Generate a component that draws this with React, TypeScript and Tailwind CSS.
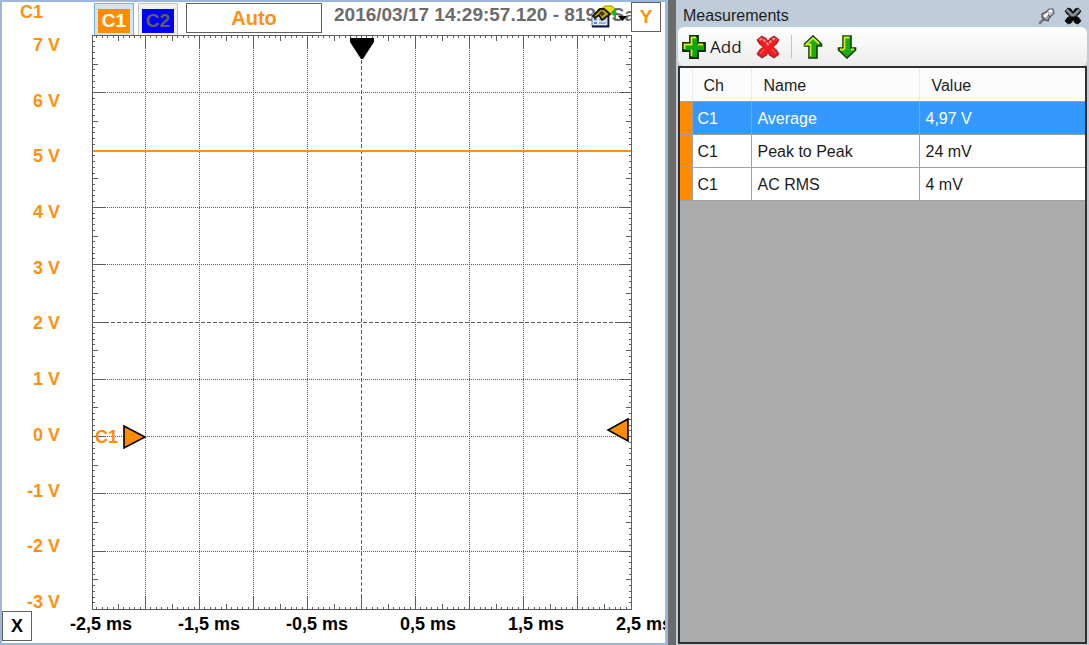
import React from "react";

const LEFT = 1;
const RIGHT = 539;
const TOP = 1;
const BOTTOM = 574;
const COL = 54;
const ROW = 57.3;
const GREY = "#5c5c5c";

const volts = ["7 V", "6 V", "5 V", "4 V", "3 V", "2 V", "1 V", "0 V", "-1 V", "-2 V", "-3 V"];
const times = ["-2,5 ms", "-1,5 ms", "-0,5 ms", "0,5 ms", "1,5 ms", "2,5 ms"];

const measurements = [
  { ch: "C1", name: "Average", value: "4,97 V" },
  { ch: "C1", name: "Peak to Peak", value: "24 mV" },
  { ch: "C1", name: "AC RMS", value: "4 mV" },
];

function tickLength(i: number) {
  if (i % 10 === 0) return 12;
  return i % 5 === 0 ? 5 : 2;
}

function Plot() {
  const columns = Array.from({ length: 9 }, (_, i) => RIGHT - COL * (9 - i));
  const rows = Array.from({ length: 9 }, (_, i) => Math.floor(TOP + ROW * (i + 1) - 0.5));
  const xTicks = Array.from({ length: 99 }, (_, i) => i + 1).map((i) => ({
    at: Math.round(RIGHT - (COL / 10) * i),
    len: tickLength(i),
  }));
  const yTicks = Array.from({ length: 99 }, (_, i) => i + 1).map((i) => ({
    at: Math.floor(TOP + (ROW / 10) * i - 0.5),
    len: tickLength(i),
  }));
  return (
    <svg
      className="block h-full w-full overflow-visible"
      viewBox="0 0 540 575"
      preserveAspectRatio="none"
      role="img"
      aria-label="Channel 1 trace"
    >
      <g stroke={GREY} strokeWidth="1" shapeRendering="crispEdges">
        {columns.map((x, i) => (
          <line key={x} x1={x + 0.5} x2={x + 0.5} y1={TOP} y2={BOTTOM} strokeDasharray={i === 4 ? "4 2" : "1 1"} />
        ))}
        {rows.map((y, i) => (
          <line key={y} x1={LEFT} x2={RIGHT} y1={y + 0.5} y2={y + 0.5} strokeDasharray={i === 4 ? "4 2" : "1 1"} />
        ))}
        {xTicks
          .filter((t) => t.at > LEFT)
          .map((t) => (
            <path key={t.at} d={`M${t.at + 0.5} ${TOP}v${t.len}M${t.at + 0.5} ${BOTTOM}v${-t.len}`} />
          ))}
        {yTicks.map((t) => (
          <path key={t.at} d={`M${LEFT} ${t.at + 0.5}h${t.len}M${RIGHT} ${t.at + 0.5}h${-t.len}`} />
        ))}
        <rect x={LEFT - 0.5} y={TOP - 0.5} width={RIGHT - LEFT + 1} height={BOTTOM - TOP + 1} fill="none" />
      </g>
      <path d="M1 116H539" stroke="#ff9010" strokeWidth="2" shapeRendering="crispEdges" />
      <path d="M258 3H282V7L271 24H269L258 7Z" fill="#000" />
      <path d="M32 391L53 402L32 413Z" fill="#ff8c00" stroke="#000" strokeWidth="1.6" />
      <path d="M536 384L516 395L536 406Z" fill="#ff8c00" stroke="#000" strokeWidth="1.6" />
      <text x="3" y="408" fill="#ff8c00" fontSize="18" fontWeight="bold">
        C1
      </text>
    </svg>
  );
}

function PropertiesIcon() {
  return (
    <svg width="37" height="24" viewBox="0 0 37 24" aria-hidden="true">
      <rect x="1" y="8" width="16" height="13" fill="#dfeafb" stroke="#5577ad" />
      <path d="M1 21.500H17.500V9" stroke="#0c1a38" strokeWidth="1.8" fill="none" />
      <path d="M3 14.500h3M3 18h3" stroke="#3668c8" strokeWidth="1.5" />
      <path d="M8 14.500h7M8 18h7" stroke="#7f9ed4" strokeWidth="1.5" />
      <path d="M10 4L14 1H21L24 4V8L18 10L12 8Z" fill="#f3dc10" stroke="#a18c06" />
      <path d="M20 7L25 3V14L22 10Z" fill="#12b42a" />
      <path d="M2 11L9 4H13L19 9L15 12L11 15L8 10L4 13Z" fill="#c4a61e" stroke="#1c1903" strokeWidth="1.8" />
      <path d="M8 8L11 6L14 9L11 11Z" fill="#3a330a" />
      <path d="M27 11H36L31.500 16Z" fill="#000" />
    </svg>
  );
}

function PlusIcon() {
  return (
    <svg width="24" height="24" viewBox="0 0 24 24" aria-hidden="true">
      <path d="M8 1H16V8H23V16H16V23H8V16H1V8H8Z" fill="#08a80c" stroke="#0b2a05" strokeWidth="1.8" />
      <path d="M9.500 21V14.500M2.500 14V9.500H9.500V2.500H14M16 9.500H21" fill="none" stroke="#d8ea1c" strokeWidth="1.8" />
    </svg>
  );
}

function RemoveIcon() {
  return (
    <svg width="24" height="24" viewBox="0 0 24 24" aria-hidden="true">
      <path
        d="M6 1.500L10 4L12 7L14 4L18 1.500L22.500 5L20 9L16.500 12L20 15L22.500 19L18 22.500L14 20L12 17L10 20L6 22.500L1.500 19L4 15L7.500 12L4 9L1.500 5Z"
        fill="#fb1a20"
        stroke="#b5252b"
        strokeWidth="1.6"
        strokeLinejoin="round"
      />
      <path d="M3.500 5L6 3.500L10 7L12 9.500L14 7L18 3.500L20.500 5" fill="none" stroke="#ff9e9c" strokeWidth="1.8" strokeDasharray="3 1.5" />
      <path d="M4 18.500L8 14M20 18.500L16 14" stroke="#ff5a58" strokeWidth="1.2" />
    </svg>
  );
}

function ArrowIcon({ down = false }: { down?: boolean }) {
  return (
    <svg width="20" height="24" viewBox="0 0 20 24" aria-hidden="true">
      {down ? (
        <>
          <path d="M6 1H14V13H18.500V15L10 23L1.500 15V13H6Z" fill="#1cae10" stroke="#16380a" strokeWidth="1.6" />
          <path d="M7.500 14V2.500H12.500M3 14.500H7.500M14 14.500H17" fill="none" stroke="#c9e830" strokeWidth="1.8" />
        </>
      ) : (
        <>
          <path d="M6 23H14V11H18.500V9L10 1L1.500 9V11H6Z" fill="#1cae10" stroke="#16380a" strokeWidth="1.6" />
          <path d="M7.500 21.500V9.500H3L10 3L16 8.500" fill="none" stroke="#c9e830" strokeWidth="1.8" />
        </>
      )}
    </svg>
  );
}

function PinIcon() {
  return (
    <svg width="18" height="18" viewBox="0 0 18 18" aria-hidden="true">
      <path d="M2 16L6 12" stroke="#77797c" strokeWidth="2.500" strokeLinecap="round" />
      <path d="M4 7Q3 12 10 14L12 9L8 5Z" fill="#a4a6a9" stroke="#4d5054" strokeWidth="1.2" />
      <path d="M8 5L11 2H15L16 6L12 10Z" fill="#c4c6c9" stroke="#5c5f63" strokeWidth="1.2" />
      <path d="M7 9L9 7M12 4L13 4" stroke="#fff" strokeWidth="2.500" strokeLinecap="round" />
    </svg>
  );
}

function CloseIcon() {
  return (
    <svg width="18" height="20" viewBox="0 0 18 20" aria-hidden="true">
      <path
        d="M4 2L7 3L9 6L11 3L14 2L17 5L15 8L12 10L15 12L17 15L14 18L11 17L9 14L7 17L4 18L1 15L3 12L6 10L3 8L1 5Z"
        fill="#080808"
        stroke="#222"
        strokeLinejoin="round"
      />
      <path d="M3.500 4.500L8 9H10L14.500 4.500" fill="none" stroke="#8b8e92" strokeWidth="3" strokeLinecap="round" />
    </svg>
  );
}

function ScopePanel() {
  return (
    <section className="flex w-[61.34%] shrink-0 flex-col overflow-hidden border-2 border-r-[3px] border-[#9bb7d9] bg-white font-bold">
      <div className="flex min-h-0 flex-1">
        <div className="flex w-[90px] shrink-0 flex-col text-[18px] text-[#ff9010]">
          <div className="h-[35px] pl-[18px] leading-5">C1</div>
          <ul className="flex flex-1 flex-col justify-between pr-8 text-right leading-4">
            {volts.map((v) => (
              <li key={v}>{v}</li>
            ))}
          </ul>
        </div>
        <div className="flex min-w-0 flex-1 flex-col">
          <header className="flex h-[33px] shrink-0 pr-1">
            <button className="ml-0.5 mt-px h-8 w-10 shrink-0 border border-b-0 border-[#78b0ea] bg-[#cfe5fa] px-[3px] pt-[3px]">
              <span className="block h-6 bg-[#ff8c00] text-center text-[19px] leading-6 text-white">C1</span>
            </button>
            <button className="ml-1 mt-px h-8 w-10 shrink-0 border border-b-0 border-[#c4c4c4] bg-[#f0f0f0] px-[3px] pt-[3px]">
              <span className="block h-6 bg-[#0000ff] text-center text-[19px] leading-6 text-[#606060]">C2</span>
            </button>
            <button className="mt-px ml-2 h-[30px] w-[136px] shrink-0 border border-[#606060] text-[20px] leading-7 text-[#ff9010]">
              Auto
            </button>
            <div className="relative ml-3 min-w-0 flex-1">
              <p className="overflow-hidden text-[19px] leading-[26px] whitespace-nowrap text-[#6b6b6b]">
                2016/03/17 14:29:57.120 - 8192 Sa
              </p>
              <button aria-label="Display properties" className="absolute top-[3px] right-[3px]">
                <PropertiesIcon />
              </button>
            </div>
            <button className="h-[30px] w-[30px] shrink-0 border border-[#606060] text-[19px] leading-6 text-[#ff9010]">
              Y
            </button>
          </header>
          <div className="min-h-0 flex-1 pr-[33px]">
            <Plot />
          </div>
        </div>
      </div>
      <footer className="flex h-[33px] shrink-0 items-start text-[18px] text-black">
        <button className="mt-px h-[30px] w-[30px] shrink-0 border border-[#606060] leading-6">X</button>
        <ul className="grid min-w-0 flex-1 grid-cols-[15.8%_repeat(5,17.06%)] text-right leading-7 whitespace-nowrap">
          {times.map((t) => (
            <li key={t}>{t}</li>
          ))}
        </ul>
      </footer>
    </section>
  );
}

function MeasurementsPanel() {
  return (
    <aside className="flex min-w-0 flex-1 flex-col bg-[#bfcddb] pr-0.5 pb-px pl-0.5 text-[16px] text-[#1c1c1c]">
      <header className="flex h-[27px] shrink-0 items-center gap-2 px-[5px]">
        <h1 className="flex-1 pt-1">Measurements</h1>
        <button aria-label="Pin panel" className="pt-1">
          <PinIcon />
        </button>
        <button aria-label="Close panel" className="pt-1">
          <CloseIcon />
        </button>
      </header>
      <div className="flex h-[39px] shrink-0 items-center rounded-md bg-linear-to-b from-[#fefefe] to-[#ededed] pl-1">
        <button className="flex items-center gap-1 font-['Open_Sans',sans-serif] text-[17px]">
          <PlusIcon />
          Add
        </button>
        <button aria-label="Remove" className="ml-[14px]">
          <RemoveIcon />
        </button>
        <div className="mx-[11px] h-6 w-px bg-[#c4c4c4]" />
        <button aria-label="Move up">
          <ArrowIcon />
        </button>
        <button aria-label="Move down" className="ml-[14px]">
          <ArrowIcon down />
        </button>
      </div>
      <div className="min-h-0 flex-1 border-2 border-[#303030] bg-[#ababab]">
        <table className="w-full table-fixed border-collapse bg-white text-left">
          <colgroup>
            <col className="w-[13px]" />
            <col className="w-[59px]" />
            <col className="w-[168px]" />
            <col />
          </colgroup>
          <thead>
            <tr className="h-[33px] bg-[#fcfcfc]">
              <th className="border-r border-b border-r-[#e4ecf5] border-b-[#a0a0a0]" aria-label="Color" />
              <th className="border-r border-b border-r-[#e4ecf5] border-b-[#a0a0a0] pt-1 pl-2.5 font-normal">Ch</th>
              <th className="border-r border-b border-r-[#e4ecf5] border-b-[#a0a0a0] pt-1 pl-[11px] font-normal">Name</th>
              <th className="border-b border-[#a0a0a0] pt-1 pl-[11px] font-normal">Value</th>
            </tr>
          </thead>
          <tbody>
            {measurements.map((m, i) => (
              <tr key={m.name} className={i === 0 ? "h-[33px] bg-[#3399ff] text-white" : "h-[33px]"}>
                <td className="border-r border-b border-[#a0a0a0] bg-[#ff8c00]" />
                <td className="border-r border-b border-[#a0a0a0] pt-0.5 pl-1">{m.ch}</td>
                <td className="border-r border-b border-[#a0a0a0] pt-0.5 pl-[5px]">{m.name}</td>
                <td className="border-b border-[#a0a0a0] pt-0.5 pl-[5px]">{m.value}</td>
              </tr>
            ))}
          </tbody>
        </table>
      </div>
    </aside>
  );
}

export default function App() {
  return (
    <main className="flex h-screen overflow-hidden font-['Liberation_Sans',Arial,sans-serif]">
      <ScopePanel />
      <div className="w-2 shrink-0 bg-[#6b6b6b]" />
      <MeasurementsPanel />
    </main>
  );
}
